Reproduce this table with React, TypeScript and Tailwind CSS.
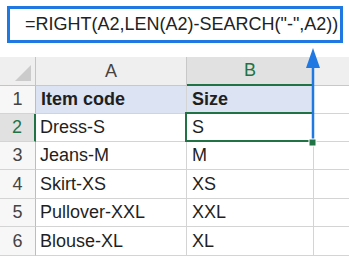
import React from "react";

const rows: { n: number; a: string; b: string; h: string }[] = [
  { n: 1, a: "Item code", b: "Size", h: "h-[28px]" },
  { n: 2, a: "Dress-S", b: "S", h: "h-[28px]" },
  { n: 3, a: "Jeans-M", b: "M", h: "h-[28px]" },
  { n: 4, a: "Skirt-XS", b: "XS", h: "h-[29px]" },
  { n: 5, a: "Pullover-XXL", b: "XXL", h: "h-[28px]" },
  { n: 6, a: "Blouse-XL", b: "XL", h: "h-[29px]" },
];

export default function App() {
  return (
    <div
      className="relative w-[349px] h-[256px] overflow-hidden bg-white text-[#1f1f1f]"
      style={{ fontFamily: '"Liberation Sans", Arial, sans-serif' }}
    >
      <div className="pt-[6px] pl-[7px] pr-[6px]">
        <div className="h-[37px] border-[3px] border-[#2079e2] bg-white flex items-center pl-[15px] text-[18px] text-[#222] whitespace-nowrap">
          =RIGHT(A2,LEN(A2)-SEARCH("-",A2))
        </div>
      </div>
      <div className="mt-[14px] flex flex-col">
        {/* column header row */}
        <div className="flex h-[29px]">
          <div className="relative w-[36px] shrink-0 bg-[#efefef] border-r border-b border-[#c4c4c4]">
            <div className="absolute right-[4px] bottom-[4px] w-0 h-0 border-l-[16px] border-l-transparent border-b-[16px] border-b-[#cbcbcb]" />
          </div>
          <div className="w-[151px] shrink-0 bg-[#efefef] border-r border-b border-[#c8c8c8] flex items-center justify-center text-[18px] text-[#444]">
            A
          </div>
          <div className="w-[127px] shrink-0 bg-[#e1e1e1] border-r border-[#c8c8c8] border-b-[2px] border-b-[#217346] flex items-center justify-center text-[18px] text-[#217346]">
            B
          </div>
          <div className="flex-1 bg-[#efefef] border-b border-[#c8c8c8]" />
        </div>
        {rows.map((r) => {
          const sel = r.n === 2;
          const hdr = r.n === 1;
          return (
            <div key={r.n} className={`flex ${r.h}`}>
              <div
                className={
                  sel
                    ? "w-[36px] shrink-0 bg-[#e1e1e1] border-r-[2px] border-r-[#217346] border-b border-b-[#d4d4d4] flex items-center justify-center text-[18px] text-[#217346]"
                    : "w-[36px] shrink-0 bg-[#f7f7f7] border-r border-r-[#bdbdbd] border-b border-b-[#d4d4d4] flex items-center justify-center text-[18px] text-[#444]"
                }
              >
                {r.n}
              </div>
              <div
                className={
                  hdr
                    ? "w-[151px] shrink-0 bg-[#dce3f2] border-r border-b border-[#d4d4d4] flex items-center pl-[5px] text-[18px] font-bold"
                    : "w-[151px] shrink-0 bg-white border-r border-b border-[#d4d4d4] flex items-center pl-[4px] text-[18px]"
                }
              >
                {r.a}
              </div>
              <div
                className={
                  hdr
                    ? "relative w-[127px] shrink-0 bg-[#dce3f2] border-r border-b border-[#d4d4d4] flex items-center pl-[5px] text-[18px] font-bold"
                    : "relative w-[127px] shrink-0 bg-white border-r border-b border-[#d4d4d4] flex items-center pl-[5px] text-[18px]"
                }
              >
                {sel && (
                  <div className="absolute left-[-2px] top-[-2px] right-[-1px] bottom-[-1px] border-[2px] border-[#217346]" />
                )}
                <span className="relative">{r.b}</span>
              </div>
              <div className="flex-1 bg-white border-b border-[#d4d4d4]" />
            </div>
          );
        })}
      </div>
      {/* arrow overlay */}
      <svg
        className="absolute left-0 top-0"
        width="349"
        height="256"
        viewBox="0 0 349 256"
      >
        <line x1="313" y1="62" x2="313" y2="142" stroke="#2079e2" strokeWidth="2.5" />
        <polygon points="313,48 306,68 320,68" fill="#2079e2" />
        <rect x="309" y="139" width="7" height="7" fill="#217346" stroke="#ffffff" strokeWidth="1" />
      </svg>
    </div>
  );
}
